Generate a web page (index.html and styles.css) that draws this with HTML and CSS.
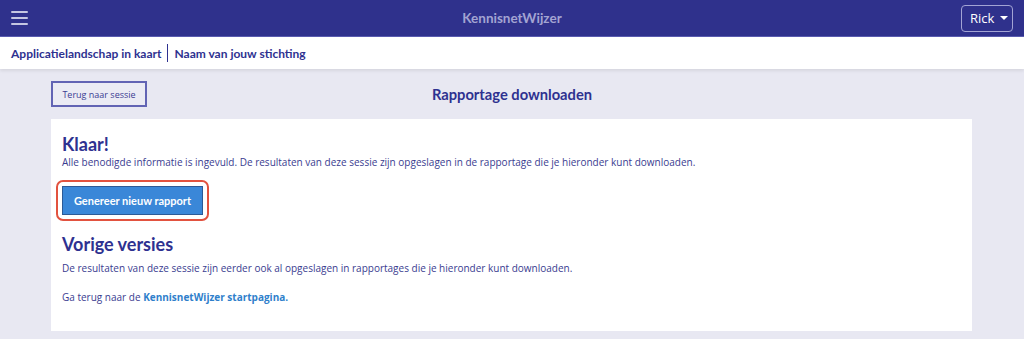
FILE: index.html
```html
<!DOCTYPE html>
<html lang="nl">
<head>
<meta charset="utf-8">
<title>KennisnetWijzer</title>
<link rel="stylesheet" href="styles.css">
</head>
<body>
<header class="navbar">
  <button class="burger" aria-label="Menu">
    <span></span><span></span><span></span>
  </button>
  <div class="brand">KennisnetWijzer</div>
  <button class="user">Rick <span class="caret"></span></button>
</header>
<div class="subbar">
  <span>Applicatielandschap in kaart</span>
  <span class="sep"></span>
  <span>Naam van jouw stichting</span>
</div>
<main class="main">
  <div class="toolbar">
    <button class="back">Terug naar sessie</button>
    <h1 class="title">Rapportage downloaden</h1>
    <div class="spacer"></div>
  </div>
  <section class="card">
    <h2>Klaar!</h2>
    <p class="p-first">Alle benodigde informatie is ingevuld. De resultaten van deze sessie zijn opgeslagen in de rapportage die je hieronder kunt downloaden.</p>
    <div class="focus-ring"><button class="primary">Genereer nieuw rapport</button></div>
    <h2 class="h-prev">Vorige versies</h2>
    <p class="p-prev">De resultaten van deze sessie zijn eerder ook al opgeslagen in rapportages die je hieronder kunt downloaden.</p>
    <p class="back-link">Ga terug naar de <a href="#">KennisnetWijzer startpagina.</a></p>
  </section>
</main>
</body>
</html>
```

FILE: styles.css
```css
* { box-sizing: border-box; }
html, body { margin: 0; padding: 0; }
body {
  background: #e8e8f2;
  font-family: "Open Sans", "Noto Sans", sans-serif;
  color: #2e3190;
  height: 339px;
  overflow: hidden;
}
.navbar {
  height: 37px;
  background: #2f318c;
  border-bottom: 1px solid #5a5cb0;
  display: flex;
  align-items: center;
  justify-content: space-between;
  padding: 0 11px;
  position: relative;
}
.burger {
  background: none;
  border: 0;
  padding: 0;
  width: 17px;
  height: 14px;
  display: flex;
  flex-direction: column;
  justify-content: space-between;
}
.burger span {
  display: block;
  height: 2px;
  background: #c5c6e2;
  width: 17px;
  border-radius: 1px;
}
.brand {
  position: absolute;
  left: 0; right: 0;
  text-align: center;
  font-family: "Lato", "Noto Sans", sans-serif;
  font-weight: 700;
  font-size: 13.5px;
  color: #a3a4d2;
  pointer-events: none;
}
.user {
  background: transparent;
  border: 1px solid #a3a4d4;
  border-radius: 4px;
  color: #fff;
  font-family: "Open Sans", sans-serif;
  font-size: 13px;
  height: 27px;
  width: 52px;
  padding: 0 0 0 8px;
  display: flex;
  align-items: center;
  gap: 6px;
  position: relative;
  z-index: 1;
}
.caret {
  width: 0; height: 0;
  border-left: 4px solid transparent;
  border-right: 4px solid transparent;
  border-top: 4px solid #fff;
}
.subbar {
  height: 32px;
  background: #fff;
  display: flex;
  align-items: center;
  padding: 0 11px;
  gap: 6px;
  font-family: "Lato", "Noto Sans", sans-serif;
  font-weight: 700;
  font-size: 12px;
  color: #2e3190;
  box-shadow: 0 2px 3px rgba(0,0,0,0.08);
  position: relative;
}
.sep {
  width: 1px;
  height: 18px;
  background: #2e3190;
}
.main {
  padding: 12px 51px 0 51px;
}
.toolbar {
  display: flex;
  align-items: center;
  justify-content: space-between;
  height: 26px;
}
.back {
  width: 96px;
  height: 26px;
  border: 2px solid #6264b4;
  background: #ebebf4;
  color: #3b3d93;
  font-family: "Open Sans", sans-serif;
  font-size: 9px;
  padding: 0;
}
.spacer { width: 96px; }
.title {
  margin: 0;
  font-family: "Lato", "Noto Sans", sans-serif;
  font-weight: 700;
  font-size: 14.7px;
  color: #2e3190;
}
.card {
  margin-top: 12px;
  width: 921px;
  height: 212px;
  background: #fff;
  padding: 15px 11px 0;
}
.card h2 {
  margin: 0;
  font-family: "Lato", "Noto Sans", sans-serif;
  font-weight: 700;
  font-size: 18px;
  line-height: 20px;
  color: #2e3190;
}
.card p {
  margin: 0;
  font-size: 10px;
  line-height: 14px;
  color: #3a3c90;
}
.card .p-first { margin-top: 1px; }
.focus-ring {
  display: inline-block;
  margin: 11px 0 0 -6px;
  border: 2px solid #e2523f;
  border-radius: 7px;
  padding: 4px;
}
.primary {
  display: block;
  width: 141px;
  height: 29px;
  background: #3a87d8;
  border: 1px solid #2c5a96;
  color: #fff;
  font-family: "Lato", "Noto Sans", sans-serif;
  font-weight: 700;
  font-size: 11px;
  padding: 0;
}
.card .h-prev { margin-top: 13px; }
.card .p-prev { margin-top: 7px; }
.card p.back-link { margin-top: 15px; }
.back-link a {
  color: #2f7fcb;
  font-weight: 700;
  text-decoration: none;
}
```
